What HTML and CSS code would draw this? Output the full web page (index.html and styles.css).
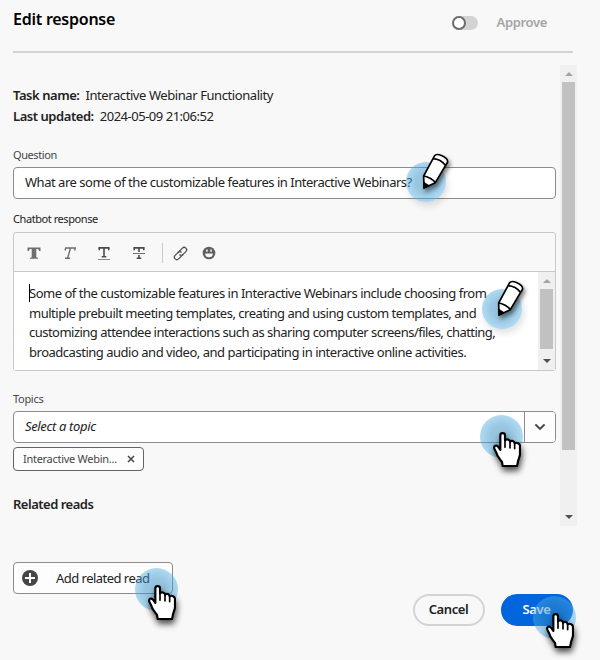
FILE: index.html
```html
<!DOCTYPE html>
<html lang="en">
<head>
<meta charset="utf-8">
<title>Edit response</title>
<link rel="stylesheet" href="styles.css">
</head>
<body>
<svg class="defs" aria-hidden="true">
  <symbol id="hand" viewBox="0 0 84 106">
    <path d="M22 54V10C22 1 36 1 36 10V25C41 20 50 22 51 29C56 24 64 27 65 34C71 30 81 34 81 42V66C81 76 74 84 74 94L72 102H29L27 90C20 80 12 74 10 62L4 50C1 42 10 37 16 45Z" fill="#fff" stroke="#000" stroke-width="6.500" stroke-linejoin="round"/>
    <path d="M36 24V46M51 30V48M65 35V50" fill="none" stroke="#000" stroke-width="5" stroke-linecap="round"/>
  </symbol>
  <symbol id="pencil" viewBox="0 0 82 114">
    <path d="M5 72L38 11C44 2 78 14 77 30L40 92L6 108Z" fill="#fff" stroke="#000" stroke-width="5" stroke-linejoin="round"/>
    <path d="M33 20C46 21 62 29 70 40M5 72C16 73 34 82 40 92" fill="none" stroke="#000" stroke-width="5"/>
    <path d="M5 90L22 101L5 110Z" stroke="#000" stroke-width="2"/>
  </symbol>
</svg>
<header class="header">
  <h1 class="title">Edit response</h1>
  <span class="switch"><span class="knob"></span></span>
  <span class="approve">Approve</span>
</header>
<main class="main">
  <div class="content">
    <div class="meta"><b>Task name:</b><span class="task">Interactive Webinar Functionality</span></div>
    <div class="meta"><b>Last updated:</b><span class="date">2024-05-09 21:06:52</span></div>
    <div class="label question">Question</div>
    <div class="field">What are some of the customizable features in Interactive Webinars?</div>
    <div class="label chatbot">Chatbot response</div>
    <div class="editor">
      <div class="toolbar">
        <svg class="tool" viewBox="0 0 14 14"><path d="M.5 1.500h13V5h-1.300C12 3.400 11.400 3 9.300 3v8q0 .7 1.700.7v1H3v-1q1.700 0 1.700-.7V3C2.600 3 2 3.400 1.800 5H.5Z" fill="#6e6e6e"/></svg>
        <svg class="tool" viewBox="0 0 14 14"><path d="M3 4.500L3.700 2h9.600l-.6 2.500M8.500 2L5.700 12M3 12.200h5" fill="none" stroke="#6e6e6e" stroke-width="1.400"/></svg>
        <svg class="tool" viewBox="0 0 14 14"><path d="M2.200 4.200V1.900h9.600v2.300M7 2v8.500M4.700 10.800h4.600" fill="none" stroke="#4b4b4b" stroke-width="1.600"/><path d="M1 13.500h12" stroke="#8a8a8a"/></svg>
        <svg class="tool strike" viewBox="0 0 14 14"><path d="M2.200 4.200V1.900h9.600v2.300M7 2V6M7 9V12M4.700 12.200h4.600" fill="none" stroke="#4b4b4b" stroke-width="1.600"/><path d="M1 7.500h12" stroke="#6e6e6e"/></svg>
        <span class="sep"></span>
        <svg class="link" viewBox="0 0 14 14"><g fill="none" stroke="#505050" stroke-width="1.200" transform="rotate(-45 7 7)"><path d="M8.300 9.300H2.200a2.300 2.300 0 0 1 0-4.600h4a2.300 2.300 0 0 1 2.200 2.300"/><path d="M5.700 4.700h6.100a2.300 2.300 0 0 1 0 4.600h-4a2.300 2.300 0 0 1-2.200-2.300"/></g></svg>
        <svg class="smile" viewBox="0 0 14 14"><circle cx="7" cy="7" r="6.300" fill="#5f5f5f"/><path d="M3.200 7.500h7.600a3.800 3.800 0 0 1-7.600 0M4.200 3.500h1.500v2.300H4.200zM8.300 3.500h1.500v2.300H8.300z" fill="#f8f8f8"/></svg>
      </div>
      <div class="textarea">
        <p class="text"><span class="caret"></span>Some of the customizable features in Interactive Webinars include choosing from<br>multiple prebuilt meeting templates, creating and using custom templates, and<br><span class="tight">customizing attendee interactions such as sharing computer screens/files, chatting,</span><br>broadcasting audio and video, and participating in interactive online activities.</p>
        <div class="bar inner"><i class="up"></i><span class="thumb"></span><i class="down"></i></div>
      </div>
    </div>
    <div class="label topics">Topics</div>
    <div class="combo"><span class="value">Select a topic</span><span class="drop"><svg width="12" height="8" viewBox="0 0 12 8"><path d="M2 2L6 6L10 2" fill="none" stroke="#464646" stroke-width="1.900" stroke-linecap="round"/></svg></span></div>
    <div class="chip"><span>Interactive Webin...</span><svg width="8" height="8" viewBox="0 0 8 8"><path d="M1 1l6 6M7 1L1 7" stroke="#464646" stroke-width="1.500"/></svg></div>
    <div class="related">Related reads</div>
  </div>
  <div class="bar outer"><i class="up"></i><span class="thumb"></span><i class="down"></i></div>
</main>
<button class="add"><svg width="16" height="16" viewBox="0 0 16 16"><circle cx="8" cy="8" r="8" fill="#464646"/><path d="M8 3v10M3 8h10" stroke="#fff" stroke-width="2"/></svg><span>Add related read</span></button>
<footer class="footer"><button class="btn cancel">Cancel</button><button class="btn save">Save</button></footer>

<div class="spot edit p1"><svg class="pencil"><use href="#pencil"/></svg></div>
<div class="spot edit p2"><svg class="pencil"><use href="#pencil"/></svg></div>
<div class="spot click h1"><svg class="hand"><use href="#hand"/></svg></div>
<div class="spot click h2"><svg class="hand"><use href="#hand"/></svg></div>
<div class="spot click h3"><svg class="hand"><use href="#hand"/></svg></div>
</body>
</html>
```
FILE: styles.css
```css
* { box-sizing: border-box; }
body {
  margin: 0; width: 600px; height: 660px; overflow: hidden; position: relative;
  background: #f8f8f8; color: #222;
  font: 13px/20px "Noto Sans", sans-serif; letter-spacing: -0.48px;
}
.defs { position: absolute; width: 0; height: 0; }
.header {
  display: flex; align-items: center; height: 53px; width: 560px;
  margin-left: 13px; padding: 0 26px 14px 0; border-bottom: 2px solid #d3d3d3; color: #000;
}
.title { margin: 0; flex: 1; font-size: 16px; font-weight: 600; letter-spacing: -0.25px; }
.switch { width: 26px; height: 14px; border-radius: 7px; background: #d3d3d3; margin: 8px 19px 0 0; }
.knob { display: block; width: 14px; height: 14px; border: 2px solid #6d6d6d; border-radius: 50%; background: #fff; }
.approve { color: #a4a4a4; font-weight: 600; letter-spacing: -0.35px; margin-top: 7px; }

.main { display: flex; justify-content: space-between; margin: 12px 23px 0 13px; height: 461px; }
.content { width: 543px; padding-top: 20px; }
.meta { height: 21px; line-height: 21px; display: flex; gap: 6px; letter-spacing: -0.42px; }
.meta b { font-weight: 600; letter-spacing: -0.45px; }
.date { letter-spacing: -0.48px; }
.label { font-size: 11px; line-height: 16px; letter-spacing: -0.43px; color: #464646; }
.question { margin-top: 20px; letter-spacing: -0.42px; }
.field {
  height: 32px; margin-top: 4px; padding-left: 11px; line-height: 29px;
  border: 1px solid #8c8c8c; border-radius: 4px; background: #fff;
}
.chatbot { margin-top: 12px; color: #222; }
.editor { height: 139px; margin-top: 5px; border: 1px solid #c8c8c8; border-radius: 3px; }
.toolbar { display: flex; align-items: center; height: 39px; padding: 2px 0 0 13px; border-bottom: 1px solid #c8c8c8; }
.tool { width: 14px; height: 14px; margin-right: 21px; }
.strike { margin-right: 16px; }
.sep { width: 1px; height: 20px; background: #cacaca; margin-right: 10px; }
.link { width: 15px; height: 15px; margin-right: 14px; }
.smile { width: 14px; height: 14px; }
.textarea { display: flex; justify-content: space-between; height: 98px; background: #fff; }
.text { margin: 0; padding: 12px 0 0 15px; line-height: 19.600px; white-space: nowrap; }
.tight { letter-spacing: -0.52px; }
.caret { position: absolute; width: 1px; height: 18px; background: #000; }

.bar { width: 17px; background: #f0f0f0; display: flex; flex-direction: column; align-items: center; }
.outer { height: 461px; }
.thumb { width: 13px; background: #c1c1c1; }
.inner .thumb { height: 60px; }
.outer .thumb { height: 368px; }
.up, .down { border: 4px solid transparent; border-width: 0 4px; }
.up { border-bottom: 4px solid #a3a3a3; margin: 7px 0 6px; }
.down { border-top: 4px solid #505050; margin-top: auto; margin-bottom: 7px; }

.topics { margin-top: 20px; letter-spacing: -0.3px; }
.combo { display: flex; height: 32px; margin-top: 4px; border: 1px solid #8c8c8c; border-radius: 4px; background: #fff; }
.value { flex: 1; padding-left: 11px; line-height: 29px; font-style: italic; letter-spacing: -0.35px; }
.drop { width: 31px; display: flex; align-items: center; justify-content: center; border-left: 1px solid #8c8c8c; background: #fdfdfd; border-radius: 0 3px 3px 0; }
.chip {
  display: flex; align-items: center; justify-content: space-between; width: 131px; height: 24px;
  margin-top: 4px; padding: 0 8px 0 9px; border: 1px solid #646464; border-radius: 4px;
  background: #fdfdfd; font-size: 11px; letter-spacing: -0.280px; color: #464646;
}
.related { margin-top: 23px; font-weight: 600; letter-spacing: -0.5px; }

button { font: inherit; letter-spacing: inherit; color: inherit; }
.add {
  display: flex; align-items: center; width: 160px; height: 32px; margin: 36px 0 0 13px;
  padding: 0 0 0 8px; gap: 18px; border: 1px solid #8c8c8c; border-radius: 4px; background: #fdfdfd;
}
.add span { letter-spacing: -0.53px; }
.footer { display: flex; justify-content: flex-end; gap: 16px; padding-right: 27px; }
.btn { width: 72px; height: 32px; border: 2px solid #d3d3d3; border-radius: 16px; background: #f8f8f8; font-weight: 600; padding: 0 1px 2px 0; letter-spacing: -0.400px; }
.save { background: #0265dc; border-color: #0265dc; color: #fff; }

.spot {
  position: absolute; border-radius: 50%;
  background: radial-gradient(circle, rgba(50, 140, 195, .5) 35%, rgba(80, 175, 230, .46) 70%);
}
.edit { width: 40px; height: 40px; box-shadow: 2px 4px 7px rgba(0, 0, 0, .12); }
.click { width: 43px; height: 43px; }
.pencil { position: absolute; width: 27.300px; height: 38px; filter: drop-shadow(2px 3px 2px rgba(0, 0, 0, .5)); }
.hand { position: absolute; width: 28px; height: 35.300px; filter: drop-shadow(1px 4px 3px rgba(0, 0, 0, .7)); }
.p1 { left: 406px; top: 162px; }
.p1 .pencil { left: 15.500px; top: -10px; }
.p2 { left: 482px; top: 289px; }
.p2 .pencil { left: 15px; top: -10px; }
.h1 { left: 480px; top: 415px; }
.h2 { left: 135px; top: 568px; }
.h3 { left: 533px; top: 596px; }
.h1 .hand { left: 13px; top: 17px; }
.h2 .hand { left: 13px; top: 17px; }
.h3 .hand { left: 13px; top: 17px; }
```
